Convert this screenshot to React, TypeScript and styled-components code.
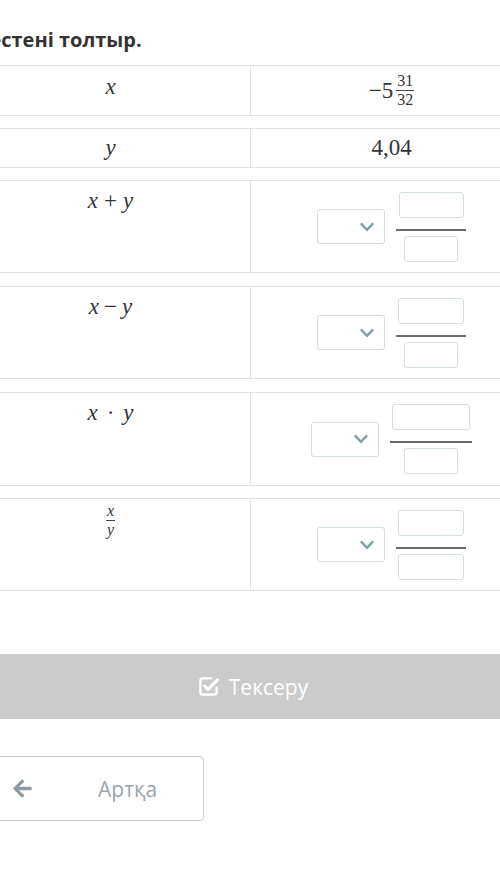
import React from "react";
import styled, { createGlobalStyle } from "styled-components";
import { FaArrowLeft, FaChevronDown } from "react-icons/fa";

const Global = createGlobalStyle`
  html, body { margin: 0; padding: 0; background: #fff; overflow: hidden; }
  body { font-family: "Open Sans", "Noto Sans", sans-serif; }
`;

const Page = styled.div`
  width: 563px;
  margin-left: -30px;
  padding-top: 27px;
`;

const Title = styled.h2`
  margin: 0 0 12px 6px;
  font-size: 20px;
  line-height: 26px;
  font-weight: 700;
  color: #333;
`;

const Table = styled.div`
  display: flex;
  flex-direction: column;
  gap: 12px;
`;

const Row = styled.div<{ $h: number }>`
  display: grid;
  grid-template-columns: 280px 1fr;
  height: ${(p) => p.$h}px;
  border: 1px solid #e2e4e4;
  box-sizing: border-box;
`;

const LeftCell = styled.div<{ $pt: number }>`
  border-right: 1px solid #e2e4e4;
  display: flex;
  justify-content: center;
  align-items: flex-start;
  padding-top: ${(p) => p.$pt}px;
`;

const RightCell = styled.div`
  display: flex;
  justify-content: center;
  align-items: center;
`;

const Math = styled.span`
  font-family: "Liberation Serif", "DejaVu Serif", serif;
  font-size: 23px;
  line-height: 26px;
  color: #333;
  white-space: pre;
  display: inline-flex;
  align-items: center;
`;

const Var = styled.i`
  font-style: italic;
`;

const Op = styled.span<{ $m: number }>`
  margin: 0 ${(p) => p.$m}px;
`;

const SmallFrac = styled.span<{ $ml: number }>`
  display: inline-flex;
  flex-direction: column;
  align-items: center;
  font-family: "Liberation Serif", "DejaVu Serif", serif;
  font-size: 16px;
  line-height: 14px;
  color: #333;
  margin-left: ${(p) => p.$ml}px;
`;

const SmallNum = styled.span`
  padding: 0 1px 2px;
  border-bottom: 1px solid #444;
`;

const SmallDen = styled.span`
  padding-top: 2px;
`;

const Widget = styled.div<{ $gap: number }>`
  display: flex;
  align-items: center;
  gap: ${(p) => p.$gap}px;
`;

const Select = styled.div`
  width: 68px;
  height: 35px;
  box-sizing: border-box;
  border: 1px solid #d3dfdf;
  border-radius: 3px;
  display: flex;
  align-items: center;
  justify-content: flex-end;
  padding-right: 9px;
  color: #7fa2a7;
  font-size: 16px;
`;

const FracCol = styled.div`
  display: flex;
  flex-direction: column;
  align-items: center;
`;

const InputBox = styled.div<{ $w: number }>`
  width: ${(p) => p.$w}px;
  height: 26px;
  box-sizing: border-box;
  border: 1px solid #d3dfdf;
  border-radius: 3px;
`;

const FracLine = styled.div<{ $w: number }>`
  width: ${(p) => p.$w}px;
  height: 2px;
  background: #6b6b6b;
  margin: 11px 0 5px;
`;

const CheckBar = styled.div`
  margin-top: 63px;
  height: 65px;
  background: #cbcbcb;
  display: flex;
  align-items: center;
  justify-content: center;
  gap: 9px;
  color: #fff;
  font-size: 21px;
  padding-left: 2px;
`;

const BackButton = styled.div`
  margin-top: 37px;
  width: 234px;
  height: 65px;
  box-sizing: border-box;
  border: 1px solid #c9cfd2;
  border-radius: 4px;
  display: flex;
  align-items: center;
  padding-left: 41px;
  color: #9aa6ab;
  font-size: 21px;
`;

const BackIcon = styled.span`
  display: flex;
  color: #8d9ca2;
  font-size: 21px;
  margin-right: 65px;
`;

const CheckIcon = () => (
  <svg width="23" height="23" viewBox="0 0 24 24" fill="none" stroke="#fff" strokeLinecap="round" strokeLinejoin="round">
    <path d="M15 3.5H6a2.5 2.5 0 0 0-2.5 2.5v12A2.5 2.5 0 0 0 6 20.5h12a2.5 2.5 0 0 0 2.5-2.5v-5" strokeWidth="2.4" />
    <path d="M8 11.5l3.5 3.5L21.5 5" strokeWidth="3.2" />
  </svg>
);

type Rw = { label: React.ReactNode; num: number; den: number; line: number; gap: number };

const Answer = ({ num, den, line, gap }: { num: number; den: number; line: number; gap: number }) => (
  <Widget $gap={gap}>
    <Select>
      <FaChevronDown />
    </Select>
    <FracCol>
      <InputBox $w={num} />
      <FracLine $w={line} />
      <InputBox $w={den} />
    </FracCol>
  </Widget>
);

const rows: Rw[] = [
  {
    label: (
      <Math>
        <Var>x</Var>
        <Op $m={6}>+</Op>
        <Var>y</Var>
      </Math>
    ),
    num: 65, den: 54, line: 70, gap: 11,
  },
  {
    label: (
      <Math>
        <Var>x</Var>
        <Op $m={5}>−</Op>
        <Var>y</Var>
      </Math>
    ),
    num: 66, den: 54, line: 70, gap: 11,
  },
  {
    label: (
      <Math>
        <Var>x</Var>
        <Op $m={9}>·</Op>
        <Var>y</Var>
      </Math>
    ),
    num: 78, den: 54, line: 82, gap: 11,
  },
  {
    label: (
      <SmallFrac $ml={0}>
        <SmallNum>
          <Var>x</Var>
        </SmallNum>
        <SmallDen>
          <Var>y</Var>
        </SmallDen>
      </SmallFrac>
    ),
    num: 66, den: 66, line: 70, gap: 11,
  },
];

const heights = [93, 93, 94, 93];
const extraGap = [0, 1, 1, 0];

const RowWrap = styled.div<{ $mt: number }>`
  margin-top: ${(p) => p.$mt}px;
`;

export default function App() {
  return (
    <>
      <Global />
      <Page>
        <Title>Кестені толтыр.</Title>
        <Table>
          <Row $h={51}>
            <LeftCell $pt={8}>
              <Math>
                <Var>x</Var>
              </Math>
            </LeftCell>
            <RightCell>
              <Math>
                −5
                <SmallFrac $ml={3}>
                  <SmallNum>31</SmallNum>
                  <SmallDen>32</SmallDen>
                </SmallFrac>
              </Math>
            </RightCell>
          </Row>
          <Row $h={40}>
            <LeftCell $pt={6}>
              <Math>
                <Var>y</Var>
              </Math>
            </LeftCell>
            <RightCell>
              <Math>4,04</Math>
            </RightCell>
          </Row>
          {rows.map((r, i) => (
            <RowWrap key={i} $mt={extraGap[i]}>
              <Row $h={heights[i]}>
                <LeftCell $pt={i === 3 ? 5 : 7}>{r.label}</LeftCell>
                <RightCell>
                  <Answer num={r.num} den={r.den} line={r.line} gap={r.gap} />
                </RightCell>
              </Row>
            </RowWrap>
          ))}
        </Table>
        <CheckBar>
          <CheckIcon />
          <span>Тексеру</span>
        </CheckBar>
        <BackButton>
          <BackIcon>
            <FaArrowLeft />
          </BackIcon>
          <span>Артқа</span>
        </BackButton>
      </Page>
    </>
  );
}
